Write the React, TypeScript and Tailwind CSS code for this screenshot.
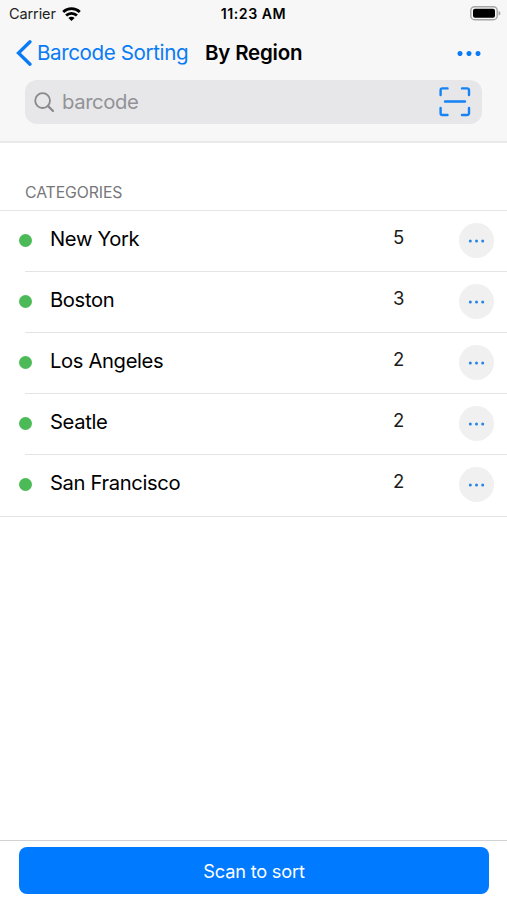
const categories = [
  { name: "New York", count: 5 },
  { name: "Boston", count: 3 },
  { name: "Los Angeles", count: 2 },
  { name: "Seatle", count: 2 },
  { name: "San Francisco", count: 2 },
];

const App = () => {
  return (
    <div className="flex h-[900px] w-[507px] flex-col overflow-hidden bg-white font-['Inter',sans-serif] text-black">
      <header className="h-[143px] shrink-0 border-b-2 border-[#e9e9ea] bg-[#f7f7f7]">
        <StatusBar />
        <NavBar />
        <SearchField />
      </header>
      <main className="flex-1">
        <h2 className="h-[67px] pl-[25px] pt-[40px] text-[15.8px] leading-[20px] tracking-[-0.1px] text-[#77777b]">
          CATEGORIES
        </h2>
        <CategoryList />
      </main>
      <Footer />
    </div>
  );
};

export default App;

const StatusBar = () => {
  return (
    <div className="grid h-[26px] grid-cols-3 items-center pl-[9px] pr-[6px] pt-[2px] text-[14.5px] leading-[20px]">
      <div className="flex items-center gap-[6px] text-[#222]">
        <span className="tracking-[-0.1px]">Carrier</span>
        <WifiIcon />
      </div>
      <span className="-ml-[3px] text-center text-[14.2px] font-semibold tracking-[0.5px]">
        11:23 AM
      </span>
      <BatteryIcon />
    </div>
  );
};

const NavBar = () => {
  return (
    <nav className="flex h-[54px] items-center pl-[16px] text-[20.6px] leading-[28px]">
      <button className="flex items-center gap-[5px] text-[#0a7bf5]">
        <svg width="16" height="27" viewBox="0 0 16 27" fill="none">
          <path d="M14 1.8 2.5 13 14 24.2" stroke="currentColor" strokeWidth="3.3" strokeLinecap="round" />
        </svg>
        <span className="w-[152px] whitespace-nowrap text-left tracking-[-0.4px]">
          Barcode Sorting
        </span>
      </button>
      <h1 className="ml-[16px] whitespace-nowrap text-[20.5px] font-semibold tracking-[-0.2px]">
        By Region
      </h1>
      <button className="ml-auto mr-[25px] text-[#0a7bf5]">
        <svg width="25" height="6" viewBox="0 0 25 6" fill="currentColor">
          <circle cx="3" cy="3.6" r="2.5" />
          <circle cx="12" cy="3.6" r="2.5" />
          <circle cx="21" cy="3.6" r="2.5" />
        </svg>
      </button>
    </nav>
  );
};

const SearchField = () => {
  return (
    <div className="ml-[25px] mt-[0.4px] flex h-[44px] w-[457px] items-center rounded-[12px] bg-[#e7e7e9] pl-[9px] pr-[11px]">
      <svg width="21" height="21" viewBox="0 0 21 21" fill="none" stroke="#88888d" strokeWidth="1.8">
        <circle cx="8.6" cy="8.6" r="7.4" />
        <path d="m13.9 13.9 5.1 5.1" strokeWidth="2.2" strokeLinecap="round" />
      </svg>
      <span className="ml-[7px] pb-px text-[20.3px] leading-[28px] tracking-[-0.4px] text-[#929297]">
        barcode
      </span>
      <svg
        className="ml-auto"
        width="32"
        height="30"
        viewBox="0 0 32 30"
        fill="none"
        stroke="#1683f5"
        strokeWidth="2.4"
        strokeLinecap="round"
        strokeLinejoin="round"
      >
        <path d="M1.6 8V3.2a1.8 1.8 0 0 1 1.8-1.8H8.5M23 1.4h5.2A1.8 1.8 0 0 1 30 3.2V8M30 21v5.2a1.8 1.8 0 0 1-1.8 1.8H23M8.5 28H3.4a1.8 1.8 0 0 1-1.8-1.8V21M6 14.5h20" />
      </svg>
    </div>
  );
};

const CategoryList = () => {
  return (
    <ul className="border-y border-[#e4e4e5]">
      {categories.map((category, index) => (
        <li key={category.name} className="flex h-[61.1px]">
          <span className="ml-[19px] mt-[23px] size-[13px] shrink-0 rounded-full bg-[#4cbb57]" />
          <span className="ml-[18px] mt-[13.5px] w-[343px] text-[20.2px] leading-[28px] tracking-[-0.35px]">
            {category.name}
          </span>
          <span className="mt-[12px] w-[66px] text-[18.5px] leading-[28px] text-[#1c1c1c]">
            {category.count}
          </span>
          <button className="mt-[12px] flex size-[35px] shrink-0 items-center justify-center rounded-full bg-[#f0f0f0]">
            <svg width="17" height="4" viewBox="0 0 17 4" fill="#2585e5">
              <circle cx="2.3" cy="2" r="1.5" />
              <circle cx="8.5" cy="2" r="1.5" />
              <circle cx="14.7" cy="2" r="1.5" />
            </svg>
          </button>
          {index < categories.length - 1 && (
            <span className="-ml-[469px] h-px w-[482px] shrink-0 self-end bg-[#e4e4e5]" />
          )}
        </li>
      ))}
    </ul>
  );
};

const Footer = () => {
  return (
    <footer className="h-[60px] border-t border-[#d2d2d4] pl-[19px] pt-[6px]">
      <button className="h-[47px] w-[470px] rounded-[8px] bg-[#007aff] text-[18.2px] leading-[28px] tracking-[-0.2px] text-white">
        Scan to sort
      </button>
    </footer>
  );
};

const WifiIcon = () => {
  return (
    <svg width="19" height="15" viewBox="0 0 19 15" fill="none" stroke="#000" strokeWidth="2.8">
      <path d="M1.2 4.9a12 12 0 0 1 16.6 0" />
      <path d="M4.1 8.5a7.7 7.7 0 0 1 10.8 0" />
      <path d="M9.5 13.9 6.4 11a4.4 4.4 0 0 1 6.2 0Z" fill="#000" stroke="none" />
    </svg>
  );
};

const BatteryIcon = () => {
  return (
    <svg className="justify-self-end" width="31" height="16" viewBox="0 0 31 16">
      <rect x="0.8" y="0.7" width="26.4" height="13" rx="3.8" fill="#f7f7f7" stroke="#a5a5a5" strokeWidth="1.4" />
      <rect x="3" y="2.7" width="22" height="9" rx="2" fill="#000" />
      <path d="M28.6 4.9v4.6c2.4-.7 2.4-3.9 0-4.6Z" fill="#a5a5a5" />
    </svg>
  );
};
